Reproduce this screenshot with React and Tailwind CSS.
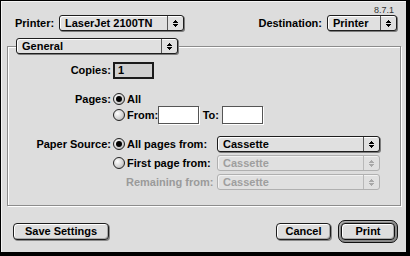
import React from "react";

function Arrows({ disabled }) {
  const c = disabled ? "#a8a8a8" : "#000";
  return (
    <svg width="5" height="7" viewBox="0 0 5 7" shapeRendering="crispEdges">
      <rect x="2" y="0" width="1" height="1" fill={c} />
      <rect x="1" y="1" width="3" height="1" fill={c} />
      <rect x="0" y="2" width="5" height="1" fill={c} />
      <rect x="0" y="4" width="5" height="1" fill={c} />
      <rect x="1" y="5" width="3" height="1" fill={c} />
      <rect x="2" y="6" width="1" height="1" fill={c} />
    </svg>
  );
}

function Popup({ label, disabled, className }) {
  return (
    <div
      className={
        "flex h-[16px] shrink-0 rounded-[3px] border bg-[#e0e0e0] " +
        (disabled
          ? "border-[#b0b0b0] text-[#9e9e9e] shadow-[inset_1px_1px_0_#f2f2f2] "
          : "border-[#1e1e1e] text-black shadow-[inset_1px_1px_0_#fff,1px_1px_0_#7c7c7c] ") +
        className
      }
    >
      <div className="flex-1 pl-[5px] text-[11px] font-bold leading-[14px] whitespace-nowrap overflow-hidden">
        {label}
      </div>
      <div
        className={
          "flex w-[16px] items-center justify-center border-l " +
          (disabled ? "border-[#b8b8b8]" : "border-[#555]")
        }
      >
        <Arrows disabled={disabled} />
      </div>
    </div>
  );
}

function Radio({ checked }) {
  return (
    <span className="flex h-[12px] w-[12px] shrink-0 items-center justify-center rounded-full border border-[#222] bg-[radial-gradient(circle_at_35%_35%,#ffffff,#d0d0d0_60%,#9a9a9a)]">
      {checked && <span className="h-[6px] w-[6px] rounded-full bg-black" />}
    </span>
  );
}

function Button({ children, className }) {
  return (
    <div
      className={
        "flex h-[17px] items-center justify-center rounded-[4px] border border-[#1e1e1e] bg-[#dedede] text-[11px] font-bold leading-none shadow-[inset_1px_1px_0_#fff,inset_-1px_-1px_0_#a8a8a8,1px_1px_0_#8a8a8a] " +
        className
      }
    >
      {children}
    </div>
  );
}

function Field({ className }) {
  return (
    <div
      className={
        "h-[18px] shrink-0 border border-[#555] bg-white shadow-[1px_1px_0_#fff] " + className
      }
    />
  );
}

export default function App() {
  return (
    <div className="h-[256px] w-[410px] bg-black font-['Liberation_Sans',Arial,sans-serif] text-black">
      <div className="h-[253px] w-[407px] border border-black bg-[#dddddd] shadow-[inset_1px_1px_0_#f4f4f4]">
        {/* version */}
        <div className="flex h-[13px] justify-end pr-[12px] pt-[5px] text-[9px] leading-[9px] text-[#333]">
          8.7.1
        </div>

        {/* printer / destination row */}
        <div className="mt-[1px] flex h-[16px] items-center pl-[14px] pr-[9px]">
          <div className="w-[44px] text-[11px] font-bold">Printer:</div>
          <Popup label="LaserJet 2100TN" className="w-[125px]" />
          <div className="ml-auto mr-[5px] text-[11px] font-bold">Destination:</div>
          <Popup label="Printer" className="w-[70px]" />
        </div>

        {/* group box */}
        <div className="ml-[6px] mt-[15px] h-[160px] w-[394px] border border-[#8c8c8c] shadow-[inset_1px_1px_0_#fff,1px_1px_0_#fff]">
          <Popup label="General" className="-mt-[9px] ml-[8px] w-[162px]" />

          <div className="grid grid-cols-[103px_1fr] gap-x-[2px] text-[11px] font-bold">
            {/* copies */}
            <div className="mt-[8px] flex h-[17px] items-center justify-end">Copies:</div>
            <div className="mt-[8px] flex h-[17px] items-center">
              <div className="flex h-[17px] w-[41px] items-center border-2 border-[#1a1a1a] bg-[#cfcfcf] pl-[3px] text-[11px] font-bold">
                1
              </div>
            </div>

            {/* pages */}
            <div className="mt-[13px] flex h-[14px] items-center justify-end">Pages:</div>
            <div className="mt-[13px] flex h-[14px] items-center gap-[2px]">
              <Radio checked />
              <span>All</span>
            </div>
            <div />
            <div className="flex h-[18px] items-center">
              <div className="flex w-[45px] items-center gap-[2px]">
                <Radio />
                <span>From:</span>
              </div>
              <Field className="w-[41px]" />
              <div className="w-[23px] pr-[3px] text-right">To:</div>
              <Field className="w-[41px]" />
            </div>

            {/* paper source */}
            <div className="mt-[12px] flex h-[16px] items-center justify-end whitespace-nowrap">
              Paper Source:
            </div>
            <div className="mt-[12px] flex h-[16px] items-center">
              <div className="flex w-[104px] items-center gap-[2px] whitespace-nowrap">
                <Radio checked />
                <span>All pages from:</span>
              </div>
              <Popup label="Cassette" className="w-[163px]" />
            </div>

            <div />
            <div className="mt-[3px] flex h-[16px] items-center">
              <div className="flex w-[104px] items-center gap-[2px] whitespace-nowrap">
                <Radio />
                <span>First page from:</span>
              </div>
              <Popup label="Cassette" disabled className="w-[163px]" />
            </div>

            <div />
            <div className="mt-[3px] flex h-[16px] items-center">
              <div className="w-[104px] whitespace-nowrap pl-[13px] text-[#9a9a9a]">
                Remaining from:
              </div>
              <Popup label="Cassette" disabled className="w-[163px]" />
            </div>
          </div>
        </div>

        {/* buttons */}
        <div className="mt-[14px] flex h-[23px] items-center pl-[12px] pr-[8px]">
          <Button className="w-[96px]">Save Settings</Button>
          <Button className="ml-auto w-[55px]">Cancel</Button>
          <div className="ml-[7px] flex h-[23px] w-[60px] rounded-[7px] border border-[#111] bg-[#8a8a8a] p-[2px] shadow-[inset_1px_1px_0_#b0b0b0]">
            <div className="flex flex-1 items-center justify-center rounded-[4px] border border-[#111] bg-[#dedede] text-[11px] font-bold leading-none shadow-[inset_1px_1px_0_#fff,inset_-1px_-1px_0_#a8a8a8]">
              Print
            </div>
          </div>
        </div>
      </div>
    </div>
  );
}
